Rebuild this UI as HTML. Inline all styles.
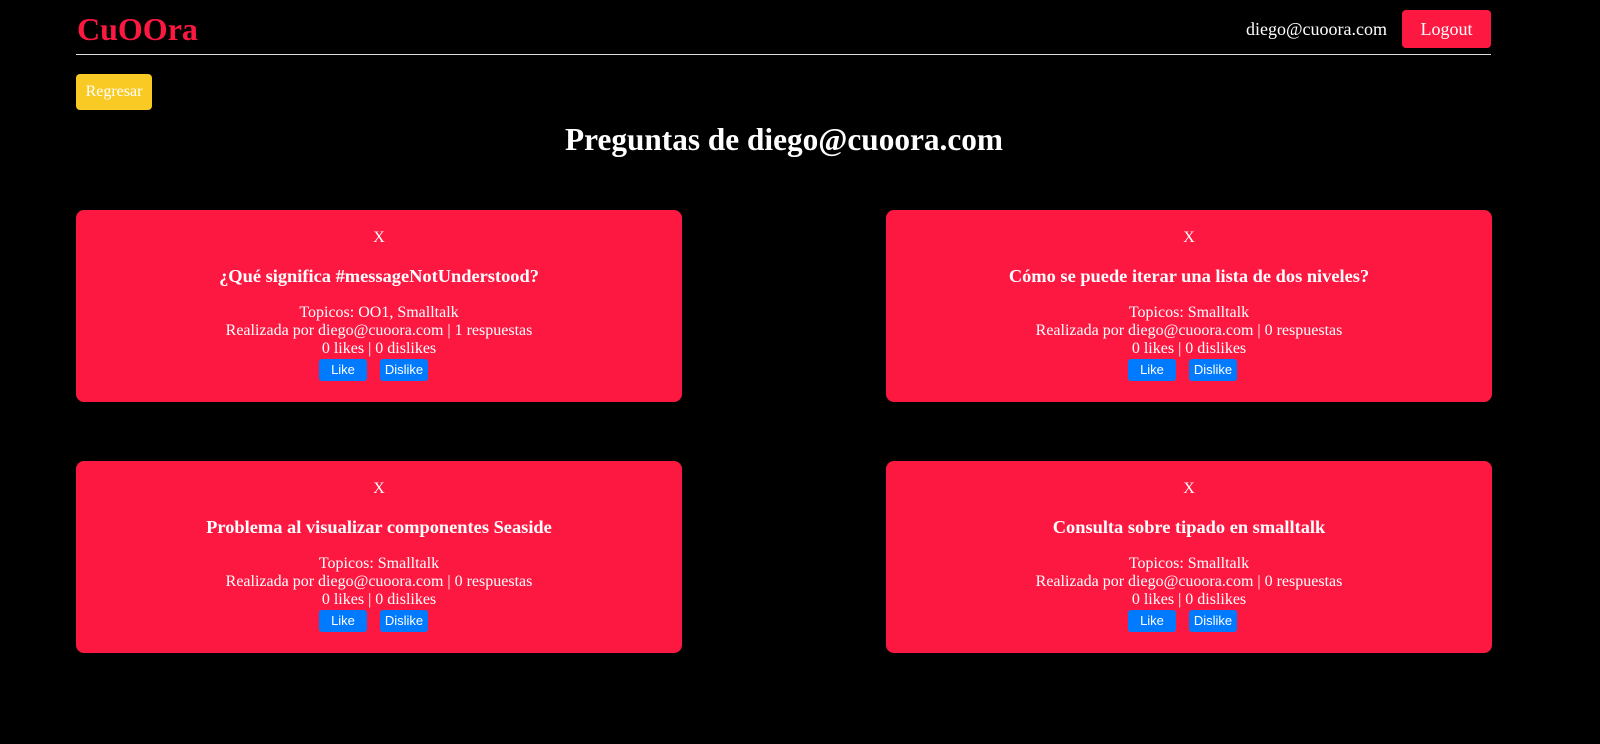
<!DOCTYPE html>
<html><head><meta charset="utf-8"><style>
body{margin:0;background:#000;width:1600px;height:744px;position:relative;font-family:"Liberation Serif",serif;color:#fff;overflow:hidden}
.a{position:absolute}
.logo{left:77px;top:9px;font-size:32px;font-weight:bold;color:#fd1842;line-height:40px}
.hr{left:76px;top:54px;width:1415px;height:1px;background:#ddd}
.email{right:213px;top:18px;font-size:18px;line-height:22px}
.logout{left:1402px;top:10px;width:89px;height:38px;background:#fd1842;border-radius:4px;font-size:18px;line-height:38px;text-align:center}
.back{left:76px;top:74px;width:76px;height:36px;background:#f9ca24;border-radius:4px;font-size:16px;line-height:36px;text-align:center}
h1{position:absolute;margin:0;left:0;width:1568px;text-align:center;top:120px;font-size:31.3px;line-height:40px}
.card{position:absolute;width:606px;height:192px;background:#fd1842;border-radius:8px;text-align:center}
.x{position:absolute;top:19px;width:100%;font-size:16px;line-height:18px}
.t{position:absolute;top:55px;width:100%;font-size:18.4px;font-weight:bold;line-height:22px}
.i{position:absolute;top:94px;width:100%;font-size:16px;line-height:18px}
.b{position:absolute;top:149px;height:22px;width:48px;background:#007bff;border-radius:3px;font-family:"Liberation Sans",sans-serif;font-size:13px;line-height:22px}
</style></head><body>
<div class="a logo">CuOOra</div>
<div class="a email">diego@cuoora.com</div>
<div class="a logout">Logout</div>
<div class="a hr"></div>
<div class="a back">Regresar</div>
<h1>Preguntas de diego@cuoora.com</h1>

<div class="card" style="left:76px;top:210px"><div class="x">X</div><div class="t">¿Qué significa #messageNotUnderstood?</div><div class="i">Topicos: OO1, Smalltalk<br>Realizada por diego@cuoora.com | 1 respuestas<br>0 likes | 0 dislikes</div><div class="b" style="left:243px">Like</div><div class="b" style="left:304px">Dislike</div></div>
<div class="card" style="left:886px;top:210px"><div class="x">X</div><div class="t">Cómo se puede iterar una lista de dos niveles?</div><div class="i">Topicos: Smalltalk<br>Realizada por diego@cuoora.com | 0 respuestas<br>0 likes | 0 dislikes</div><div class="b" style="left:242px">Like</div><div class="b" style="left:303px">Dislike</div></div>
<div class="card" style="left:76px;top:461px"><div class="x">X</div><div class="t">Problema al visualizar componentes Seaside</div><div class="i">Topicos: Smalltalk<br>Realizada por diego@cuoora.com | 0 respuestas<br>0 likes | 0 dislikes</div><div class="b" style="left:243px">Like</div><div class="b" style="left:304px">Dislike</div></div>
<div class="card" style="left:886px;top:461px"><div class="x">X</div><div class="t">Consulta sobre tipado en smalltalk</div><div class="i">Topicos: Smalltalk<br>Realizada por diego@cuoora.com | 0 respuestas<br>0 likes | 0 dislikes</div><div class="b" style="left:242px">Like</div><div class="b" style="left:303px">Dislike</div></div>
</body></html>
